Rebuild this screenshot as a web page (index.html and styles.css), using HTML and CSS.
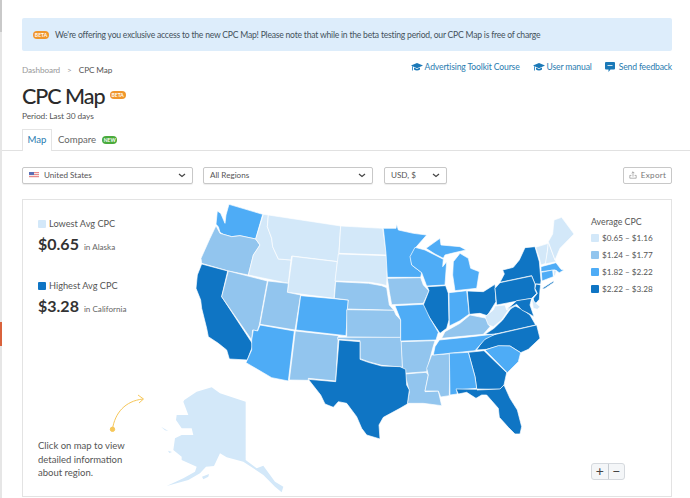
FILE: index.html
```html
<!DOCTYPE html>
<html lang="en">
<head>
<meta charset="utf-8">
<title>CPC Map</title>
<link rel="stylesheet" href="styles.css">
</head>
<body>
<div class="rail"><span class="rail-top"></span><span class="rail-mark"></span></div>
<main class="page">
  <div class="pad">
    <div class="banner"><span class="badge badge-beta">BETA</span><span>We're offering you exclusive access to the new CPC Map! Please note that while in the beta testing period, our CPC Map is free of charge</span></div>
    <div class="head-row">
      <div class="crumbs"><span class="crumb-muted">Dashboard</span><span class="crumb-sep">&gt;</span><span>CPC Map</span></div>
      <nav class="links">
        <a class="link"><svg class="ico" viewBox="0 0 12 10"><path d="M6 1 12 3.6 6 6.2 0 3.6Z"/><path d="M3 5.6v2c1.8 1.2 4.2 1.2 6 0v-2L6 7Z"/><path d="M1 4v4.500h.8V4.400Z"/></svg>Advertising Toolkit Course</a>
        <a class="link"><svg class="ico" viewBox="0 0 12 10"><path d="M6 1 12 3.6 6 6.2 0 3.6Z"/><path d="M3 5.6v2c1.8 1.2 4.200 1.200 6 0v-2L6 7Z"/><path d="M1 4v4.500h.8V4.400Z"/></svg>User manual</a>
        <a class="link"><svg class="ico ico-msg" viewBox="0 0 10 10"><path d="M1 0h8a1 1 0 0 1 1 1v5.500a1 1 0 0 1-1 1H5.500L3.500 10V7.500H1a1 1 0 0 1-1-1V1a1 1 0 0 1 1-1Z"/><path class="msg-line" d="M2.500 3.500h5"/></svg>Send feedback</a>
      </nav>
    </div>
    <div class="title-row"><h1 class="title">CPC Map</h1><span class="badge badge-beta">BETA</span></div>
    <div class="period">Period: Last 30 days</div>
    <div class="tabs">
      <span class="tab tab-on">Map</span>
      <span class="tab">Compare</span><span class="badge badge-new">NEW</span>
    </div>
  </div>
  <div class="tab-rule"></div>
  <div class="pad">
    <div class="filters">
      <div class="select select-country">
        <svg class="flag" viewBox="0 0 10 6"><rect width="10" height="6" fill="#e98b8b"/><rect y="1" width="10" height="1" fill="#f6e6e6"/><rect y="3" width="10" height="1" fill="#f6e6e6"/><rect y="5" width="10" height="1" fill="#f6e6e6"/><rect width="5" height="3" fill="#5a6fb5"/></svg>
        <span>United States</span><svg class="chev" viewBox="0 0 8 5"><path d="M1 1 4 3.500 7 1"/></svg>
      </div>
      <div class="select select-region"><span>All Regions</span><svg class="chev" viewBox="0 0 8 5"><path d="M1 1 4 3.500 7 1"/></svg></div>
      <div class="select select-cur"><span>USD, $</span><svg class="chev" viewBox="0 0 8 5"><path d="M1 1 4 3.500 7 1"/></svg></div>
      <button class="export"><svg class="exp-ico" viewBox="0 0 10 10"><path d="M1 5.500V9h8V5.500H7M3 5.500H1M5 7V1M3.300 2.700 5 1l1.700 1.700"/></svg>Export</button>
    </div>
    <section class="card">
      <svg class="map" viewBox="22 199 650 298">
        <g class="states">
        <g transform="translate(190 195) scale(.33333)">
          <path class="c3" d="M117 28 218 58 197 132 150 122 125 125 100 118 90 112 85 95 78 88 82 48 92 55 105 85 108 60Z"/>
          <path class="c2" d="M78 92 90 115 125 125 150 122 197 132 210 150 190 180 175 240 115 228 35 205 33 190 60 130Z"/>
          <path class="c4" d="M35 207 113 228 95 305 190 450 182 468 172 495 118 492 110 465 85 445 55 425 50 400 35 340 32 315 18 280 22 240Z"/>
          <path class="c2" d="M115 228 232 258 208 390 202 408 188 405 185 435 95 305Z"/>
          <path class="c1" d="M220 58 235 60 232 95 245 130 248 155 265 192 303 195 295 265 175 240 190 180 210 150 197 132Z"/>
          <path class="c1" d="M235 60 452 93 445 200 305 183 303 195 265 192 248 155 245 130 232 95Z"/>
          <path class="c1" d="M307 184 442 200 432 310 292 292Z"/>
          <path class="c2" d="M234 258 295 265 292 292 332 300 315 405 210 388Z"/>
          <path class="c3" d="M332 302 475 315 468 422 318 405Z"/>
          <path class="c3" d="M210 390 313 408 295 558 245 548 168 503 185 465 185 435 190 405 203 408Z"/>
          <path class="c2" d="M316 408 445 422 437 558 355 550 355 556 298 555Z"/>
          <path class="c1" d="M452 93 578 100 590 180 447 175Z"/>
          <path class="c1" d="M445 177 590 182 592 215 590 272 575 268 540 262 435 258Z"/>
        </g>
        <g transform="translate(370 195) scale(.33333)">
          <path class="c2" d="M-103 260-5 265 35 272 50 278 58 330 72 346-68 342-65 315-107 310Z"/>
          <path class="c2" d="M-70 344 72 346 78 360 92 375 92 428-70 426Z"/>
          <path class="c2" d="M105 537 168 532 175 540 165 590 205 588 215 632 160 625 112 625 118 590Z"/>
          <path class="c2" d="M92 440 195 437 188 460 170 530 105 535 97 520Z"/>
          <path class="c2" d="M225 410 270 385 300 360 350 370 360 395 340 418 215 430Z"/>
          <path class="c2" d="M185 480 240 476 238 602 212 606 205 588 165 588 175 540 170 520Z"/>
          <path class="c4" d="M345 418 372 400 398 375 430 330 460 345 480 360 497 390 372 418Z"/>
        </g>
        <g transform="translate(300 330) scale(.33333)">
          <path class="c2" d="M113 22 303 22 307 112 245 106 205 95 180 86 180 32 113 28Z"/>
          <path class="c4" d="M117 30 180 35 180 88 205 97 245 108 300 110 317 118 320 165 328 180 322 222 300 235 250 262 237 285 240 327 200 315 185 295 170 260 140 220 115 215 100 232 75 222 62 195 25 148 107 155Z"/>
        </g>
        <g transform="translate(380 220) scale(.33333)">
          <path class="c3" d="M10 25 48 25 50 12 55 30 100 40 140 45 105 85 92 110 95 135 125 158 122 172 22 172 18 100Z"/>
          <path class="c3" d="M105 82 135 90 165 105 190 118 188 140 200 125 195 195 140 198 125 158 95 135 90 110Z"/>
          <path class="c3" d="M138 85 180 55 183 75 240 80 258 90 215 100 195 105 190 115 165 102Z"/>
          <path class="c3" d="M220 125 240 100 265 115 272 145 298 155 290 205 225 212 218 165Z"/>
          <path class="c2" d="M22 175 122 173 130 195 147 213 130 250 35 254 28 215Z"/>
          <path class="c4" d="M142 200 197 197 205 220 207 300 200 325 180 340 150 295 128 262 132 250 147 212Z"/>
          <path class="c3" d="M207 218 260 212 268 282 240 302 208 318Z"/>
          <path class="c4" d="M262 213 310 215 345 193 348 245 322 287 300 280 268 283Z"/>
          <path class="c3" d="M45 257 130 253 150 295 175 337 168 360 62 363 62 300Z"/>
        </g>
        <g transform="translate(430 320) scale(.33333)">
          <path class="c4" d="M140 90 160 60 180 47 320 15 330 55 295 88 272 98 240 78 205 78 170 88Z"/>
          <path class="c3" d="M28 60 125 50 197 42 165 58 135 92 10 105 15 80Z"/>
          <path class="c3" d="M165 90 205 77 240 78 272 98 265 125 232 158Z"/>
          <path class="c4" d="M115 97 162 92 230 158 222 195 210 208 140 207 135 170Z"/>
          <path class="c3" d="M58 100 115 97 135 170 140 205 80 210 82 222 60 225Z"/>
          <path class="c4" d="M78 207 140 208 142 210 210 207 222 195 240 235 262 270 275 320 270 342 255 342 235 322 208 292 205 265 170 225 155 225 138 235 110 217 85 222Z"/>
        </g>
        <g transform="translate(480 210) scale(.33333)">
          <path class="c4" d="M135 113 165 110 178 155 183 212 182 222 165 222 155 197 60 217 73 192 68 180 100 172 118 150Z"/>
          <path class="c4" d="M187 235 222 212 220 218 192 237Z"/>
          <path class="c4" d="M60 218 155 198 165 222 165 240 170 250 155 265 50 285 45 235Z"/>
          <path class="c4" d="M168 222 182 225 180 240 178 268 163 285 160 265 172 250 165 235Z"/>
          <path class="c1" d="M167 112 205 100 198 160 183 165 178 145Z"/>
          <path class="c1" d="M205 97 225 150 228 155 196 162 202 125Z"/>
          <path class="c1" d="M222 30 245 22 282 72 240 115 225 150 205 95 218 72Z"/>
          <path class="c3" d="M183 170 228 158 243 178 252 180 238 188 225 180 183 185Z"/>
          <path class="c3" d="M184 187 218 180 220 200 186 213Z"/>
          <path class="c1" d="M220 180 230 182 225 197 221 198Z"/>
          <path class="c1" d="M15 320 40 300 45 288 75 285 80 300 108 275 112 285 85 300 65 330 40 350 25 345Z"/>
          <path class="c4" d="M82 297 110 272 155 265 150 285 162 320 145 310 125 300 110 283Z"/>
          <path class="c1" d="M155 268 180 290 172 298 160 295Z"/>
        </g>
        </g>
        <g transform="translate(100 370) scale(.33333)" class="c1">
          <path d="M253 90 290 65 335 52 360 70 437 95 437 270 470 295 490 287 525 335 550 350 545 367 525 350 490 315 460 295 430 275 380 262 360 250 342 288 318 290 300 310 265 330 200 348 250 325 285 305 290 290 245 270 245 260 220 240 225 205 245 195 280 195 275 175 245 175 228 150 230 135 265 135 250 95Z"/>
          <path d="M183 170 205 183 195 181Z"/>
          <path d="M204 242 216 246 208 249Z"/>
          <path d="M306 320 327 312 325 320 310 328Z"/>
        </g>
        <g class="hint-arrow">
          <path d="M112.500 429C115 413 125 401 143 399M138 395 143.500 399 139 403"/>
          <circle cx="112.500" cy="429.300" r="2.200"/>
        </g>
      </svg>
      <div class="stats">
        <div class="stat">
          <div class="stat-label"><span class="sw c1-bg"></span>Lowest Avg CPC</div>
          <div class="stat-value"><b>$0.65</b><span>in Alaska</span></div>
        </div>
        <div class="stat">
          <div class="stat-label"><span class="sw c4-bg"></span>Highest Avg CPC</div>
          <div class="stat-value"><b>$3.28</b><span>in California</span></div>
        </div>
        <p class="hint">Click on map to view<br>detailed information<br>about region.</p>
      </div>
      <div class="legend">
        <div class="legend-title">Average CPC</div>
        <div class="legend-row"><span class="sw c1-bg"></span>$0.65 – $1.16</div>
        <div class="legend-row"><span class="sw c2-bg"></span>$1.24 – $1.77</div>
        <div class="legend-row"><span class="sw c3-bg"></span>$1.82 – $2.22</div>
        <div class="legend-row"><span class="sw c4-bg"></span>$2.22 – $3.28</div>
      </div>
      <div class="zoom"><span>+</span><span>−</span></div>
    </section>
  </div>
</main>
</body>
</html>
```
FILE: styles.css
```css
* { box-sizing: border-box; }
html, body { margin: 0; height: 100%; overflow: hidden; }
body { display: flex; background: #fff; color: #333; font-family: Lato, "Noto Sans", sans-serif; font-size: 10px; }

.rail { width: 2px; flex: none; background: #e6e6e6; display: flex; flex-direction: column; }
.rail-top { height: 32px; background: #c9c9c9; }
.rail-mark { height: 24px; margin-top: 290px; background: #d9623c; }

.page { flex: 1; min-width: 0; }
.pad { padding: 0 18px 0 20px; }

.banner { margin-top: 18px; height: 33px; background: #ddedfb; border-radius: 2px; display: flex; align-items: center; gap: 6px; padding-left: 11px; font-size: 8.600px; letter-spacing: -.22px; color: #44525c; white-space: nowrap; }
.badge { display: inline-flex; align-items: center; justify-content: center; border-radius: 4px; color: #fff; font-size: 5px; font-weight: 700; letter-spacing: 0; flex: none; }
.badge-beta { width: 16px; height: 8px; background: #f0962b; }
.badge-new { width: 15px; height: 8px; background: #4aab3c; margin-left: 6px; }

.head-row { display: flex; justify-content: space-between; align-items: flex-start; height: 33px; padding-top: 11px; }
.crumbs { display: flex; gap: 7px; margin-top: 3px; font-size: 8.200px; letter-spacing: -.1px; color: #555; }
.crumb-muted, .crumb-sep { color: #999; }
.links { display: flex; gap: 13px; font-size: 8.600px; letter-spacing: -.15px; color: #2a7cb0; }
.link { display: flex; align-items: center; gap: 2px; }
.ico { width: 12px; height: 10px; fill: #1b79b8; }
.ico-msg { width: 10px; margin-right: 2px; }
.msg-line { stroke: #fff; fill: none; stroke-width: .8; }

.title-row { display: flex; align-items: center; gap: 5px; height: 26px; margin-top: -1px; }
.title { margin: 0; font-size: 21.500px; font-weight: 500; letter-spacing: -1px; color: #2b2b2b; line-height: 26px; }
.title-row .badge { margin-top: -3px; }
.period { font-size: 8.400px; letter-spacing: -.1px; color: #555; height: 14px; line-height: 14px; }

.tabs { display: flex; align-items: center; height: 21px; margin-top: 6px; font-size: 9.600px; }
.tab { color: #666; padding-left: 6px; }
.tab-on { width: 30px; height: 22px; margin-top: 1px; padding: 0; text-align: center; line-height: 20px; color: #2a7cb0; border: 1px solid #e4e4e4; border-bottom: 0; background: #fff; position: relative; }
.tab-rule { height: 1px; background: #e1e1e1; }

.filters { display: flex; align-items: center; margin-top: 15px; height: 18px; font-size: 8.100px; color: #555; }
.select { height: 17px; border: 1px solid #c8c8c8; border-radius: 2px; background: #fff; display: flex; align-items: center; gap: 5px; padding: 0 6px; box-shadow: 0 1px 1px #eee; }
.select .chev { margin-left: auto; }
.select-country { width: 171px; }
.select-region { width: 170px; margin-left: 10px; }
.select-cur { width: 63px; margin-left: 11px; }
.flag { width: 10px; height: 6px; }
.chev { width: 8px; height: 5px; fill: none; stroke: #444; stroke-width: 1.200; }
.export { margin-left: auto; width: 49px; height: 17px; border: 1px solid #c8c8c8; border-radius: 2px; background: #fff; color: #777; font: inherit; letter-spacing: .3px; display: flex; align-items: center; justify-content: center; gap: 4px; padding: 0; }
.exp-ico { width: 8px; height: 8px; fill: none; stroke: #888; stroke-width: .8; }

.card { position: relative; margin-top: 15px; height: 298px; border: 1px solid #e3e3e3; display: flex; justify-content: space-between; }
.map { position: absolute; left: -1px; top: -1px; width: 650px; height: 298px; }
.states { stroke: #fff; stroke-width: 2; stroke-linejoin: round; }
.c1 { fill: #d3e8f9; }
.c2 { fill: #92c5ee; }
.c3 { fill: #4eacf6; }
.c4 { fill: #0f75c4; }
.c1-bg { background: #d3e8f9; }
.c2-bg { background: #92c5ee; }
.c3-bg { background: #4eacf6; }
.c4-bg { background: #0f75c4; }
.hint-arrow { fill: none; stroke: #f6c75a; stroke-width: 1; }
.hint-arrow circle { fill: #f6c75a; }

.sw { width: 8px; height: 8px; flex: none; border-radius: 1px; }
.stats { position: relative; padding: 17px 0 0 15px; display: flex; flex-direction: column; }
.stat { height: 62px; }
.stat-label { display: flex; align-items: center; gap: 3px; height: 13px; font-size: 9.200px; color: #555; white-space: nowrap; }
.stat-value { display: flex; align-items: baseline; gap: 5px; margin-top: 3px; font-size: 8.100px; color: #666; white-space: nowrap; }
.stat-value b { font-size: 16px; font-weight: 700; color: #333; line-height: 22px; }
.hint { margin: 98px 0 0; font-size: 9.500px; line-height: 13.500px; color: #555; white-space: nowrap; }

.legend { position: relative; width: 80px; padding-top: 15px; font-size: 8.200px; color: #555; }
.legend-title { height: 14px; line-height: 14px; font-size: 8.800px; }
.legend-row { display: flex; align-items: center; gap: 3px; height: 17px; white-space: nowrap; }

.zoom { position: absolute; left: 568px; top: 263px; width: 34px; height: 17px; display: flex; border: 1px solid #d5d9de; border-radius: 3px; background: #f4f6f8; font-size: 14px; line-height: 14px; color: #444; }
.zoom span { flex: 1; text-align: center; }
.zoom span + span { border-left: 1px solid #c6ccd2; }
```
